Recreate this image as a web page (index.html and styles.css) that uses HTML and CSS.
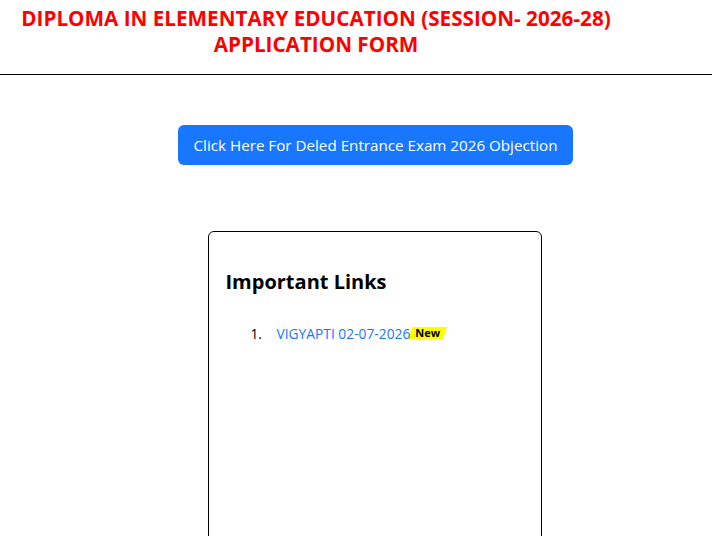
FILE: index.html
```html
<!DOCTYPE html>
<html lang="en">
<head>
    <meta charset="UTF-8">
    <meta name="viewport" content="width=device-width, initial-scale=1.0">
    <title>D.El.Ed Application Form</title>
    <link rel="stylesheet" href="styles.css">
</head>
<body>
    <header class="header">
        <div class="title">
            <h1>DIPLOMA IN ELEMENTARY EDUCATION (SESSION- 2026-28)<br>APPLICATION FORM</h1>
        </div>
    </header>
    <hr class="rule">

    <main class="content">
        <div class="column">
            <a href="#" class="btn-objection">Click Here For Deled Entrance Exam 2026 Objection</a>

            <div class="links-card">
                <h2>Important Links</h2>
                <ol class="links-list">
                    <li><a href="#">VIGYAPTI 02-07-2026</a><span class="badge-new">New</span></li>
                </ol>
            </div>
        </div>
    </main>
</body>
</html>
```

FILE: styles.css
```css
body {
    margin: 0;
    padding: 0;
    font-family: "Open Sans", "Noto Sans", Arial, sans-serif;
    color: #212529;
    background: #ffffff;
}

.header {
    display: flex;
}

.title {
    width: 632px;
    text-align: center;
}

h1 {
    margin: 0;
    padding-top: 5px;
    font-size: 20.7px;
    line-height: 26px;
    font-weight: bold;
    color: #ff0000;
}

.rule {
    margin: 17px 0 0;
    border: none;
    border-top: 1px solid #000000;
}

.content {
    display: flex;
    justify-content: center;
    padding-left: 39px;
}

.column {
    display: flex;
    flex-direction: column;
    align-items: center;
}

.btn-objection {
    display: inline-block;
    margin-top: 50px;
    padding: 8px 16px;
    font-size: 15.2px;
    line-height: 24px;
    color: #ffffff;
    background-color: #1877fe;
    border-radius: 6px;
    text-decoration: none;
}

.links-card {
    margin-top: 66px;
    width: 300px;
    height: 330px;
    padding: 24px 16px;
    border: 1px solid #000000;
    border-radius: 6px;
}

h2 {
    margin: 14px 0 30px;
    font-size: 20px;
    line-height: 24px;
    font-weight: bold;
    color: #000000;
}

.links-list {
    margin: 0;
    padding-left: 40px;
    font-size: 13.8px;
}

.links-list li {
    padding-left: 11px;
    color: #000000;
}

.links-list a {
    color: #1877fe;
    text-decoration: none;
}

/* yellow slanted tag, text stays upright */
.badge-new {
    position: relative;
    display: inline-block;
    padding: 0 5px;
    font-size: 11px;
    line-height: 12px;
    font-weight: bold;
    color: #000000;
    vertical-align: 2px;
}

.badge-new::before {
    content: "";
    position: absolute;
    inset: 0;
    z-index: -1;
    background: #ffff00;
    transform: skewX(-20deg);
}
```
